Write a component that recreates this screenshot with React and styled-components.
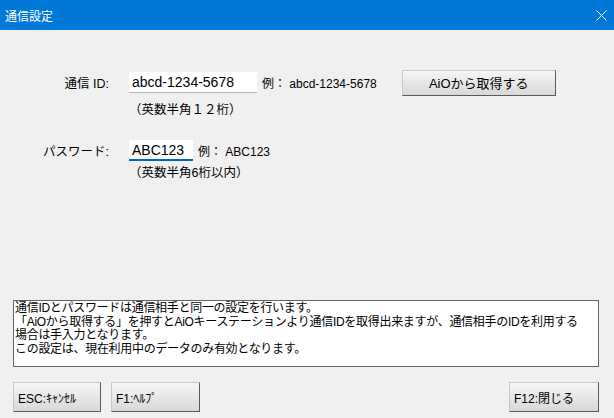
import React from 'react';
import styled, { createGlobalStyle } from 'styled-components';

const GlobalStyle = createGlobalStyle`
  html, body {
    margin: 0;
    padding: 0;
    background: #f0f0f0;
  }
  body {
    font-family: "Liberation Sans", "Noto Sans CJK JP", sans-serif;
    color: #000;
  }
`;

const Window = styled.div`
  width: 614px;
  height: 418px;
  display: flex;
  flex-direction: column;
  background: #f0f0f0;
  overflow: hidden;
`;

const TitleBar = styled.div`
  height: 30px;
  flex: none;
  background: #0078d7;
  color: #fff;
  display: flex;
  align-items: center;
  justify-content: space-between;
  padding: 0 7px 0 5px;
  font-size: 12px;
`;

const Close = styled.svg`
  width: 11px;
  height: 11px;
`;

const Form = styled.div`
  display: flex;
  flex-direction: column;
  padding: 39px 0 0 0;
  flex: 1;
`;

const Row = styled.div`
  display: flex;
  align-items: center;
  height: 27px;
  margin-top: ${p => p.$top || 0}px;
`;

const Label = styled.div`
  width: 129px;
  text-align: right;
  font-size: 12.5px;
  padding-right: 20px;
  box-sizing: border-box;
  white-space: nowrap;
`;

const Field = styled.div`
  width: ${p => p.$w}px;
  height: 21px;
  background: #fff;
  box-sizing: border-box;
  border-bottom: ${p => (p.$focus ? '2px solid #0067c0' : '1px solid #b4b4b4')};
  font-size: 14px;
  line-height: 20px;
  padding-left: 3px;
  white-space: nowrap;
  overflow: hidden;
`;

const Example = styled.div`
  font-size: 12px;
  margin-left: 5px;
  white-space: nowrap;
`;

const Hint = styled.div`
  margin: ${p => p.$top || 0}px 0 0 129px;
  font-size: 12.5px;
  height: 18px;
  line-height: 18px;
`;

const Button = styled.div`
  box-sizing: border-box;
  width: ${p => p.$w}px;
  height: ${p => p.$h}px;
  background: linear-gradient(#f6f6f6, #d8d8d8);
  border: 1px solid #c8c8c8;
  border-right-color: #5a5a5a;
  border-bottom-color: #5a5a5a;
  display: flex;
  align-items: center;
  justify-content: ${p => (p.$left ? 'flex-start' : 'center')};
  padding-left: ${p => (p.$left ? 4 : 0)}px;
  font-size: ${p => p.$fs || 12}px;
  white-space: nowrap;
`;

const FetchButton = styled(Button)`
  margin-left: 25px;
`;

const Notice = styled.div`
  margin: 0 15px 0 13px;
  height: 67px;
  box-sizing: border-box;
  background: #fff;
  border: 1px solid #646464;
  font-size: 12px;
  line-height: 13.5px;
  padding: 1px 0 0 1px;
  letter-spacing: -0.3px;
`;

const Footer = styled.div`
  display: flex;
  align-items: center;
  gap: 10px;
  padding: 15px 15px 6px 13px;
`;

const Spacer = styled.div`
  flex: 1;
`;

export default function App() {
  return (
    <Window>
      <GlobalStyle />
      <TitleBar>
        <span>通信設定</span>
        <Close viewBox="0 0 11 11">
          <path d="M0.5 0.5 L10.5 10.5 M10.5 0.5 L0.5 10.5" stroke="#fff" strokeWidth="1" />
        </Close>
      </TitleBar>
      <Form>
        <Row>
          <Label>通信 ID:</Label>
          <Field $w={128}>abcd-1234-5678</Field>
          <Example>例： abcd-1234-5678</Example>
          <FetchButton $w={154} $h={26} $fs={13}>AiOから取得する</FetchButton>
        </Row>
        <Hint $top={5}>（英数半角１２桁）</Hint>
        <Row $top={18}>
          <Label>パスワード:</Label>
          <Field $w={64} $focus>ABC123</Field>
          <Example>例： ABC123</Example>
        </Row>
        <Hint>（英数半角6桁以内）</Hint>
        <Spacer />
        <Notice>
          通信IDとパスワードは通信相手と同一の設定を行います。
          <br />
          「AiOから取得する」を押すとAiOキーステーションより通信IDを取得出来ますが、通信相手のIDを利用する
          <br />
          場合は手入力となります。
          <br />
          この設定は、現在利用中のデータのみ有効となります。
        </Notice>
      </Form>
      <Footer>
        <Button $w={88} $h={30} $left>ESC:ｷｬﾝｾﾙ</Button>
        <Button $w={89} $h={30} $left>F1:ﾍﾙﾌﾟ</Button>
        <Spacer />
        <Button $w={90} $h={30} $left>F12:閉じる</Button>
      </Footer>
    </Window>
  );
}
